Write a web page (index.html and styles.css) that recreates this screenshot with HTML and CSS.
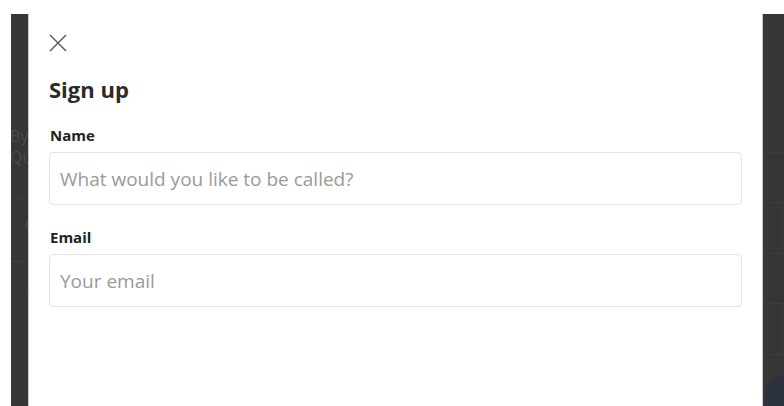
FILE: index.html
```html
<!DOCTYPE html>
<html>
<head>
<meta charset="utf-8">
<link rel="stylesheet" href="styles.css">
</head>
<body>
<div class="backdrop">
  <div class="strip strip-left">
    <div class="ghost-text">By<br>Qu</div>
    <div class="ghost-line l1"></div>
    <div class="ghost-dot orange"></div>
    <div class="ghost-line l2"></div>
    <div class="ghost-dot blue"></div>
  </div>
  <div class="modal">
    <button class="close" aria-label="Close">
      <svg width="18" height="18" viewBox="0 0 18 18"><path d="M1 1 L17 17 M17 1 L1 17" stroke="#555" stroke-width="1.4" fill="none"/></svg>
    </button>
    <h1 class="title">Sign up</h1>
    <label class="label">Name</label>
    <div class="input">What would you like to be called?</div>
    <label class="label">Email</label>
    <div class="input">Your email</div>
  </div>
  <div class="strip strip-right">
    <div class="rline"></div>
    <div class="card c1"></div>
    <div class="card c2"></div>
    <div class="fab"></div>
  </div>
</div>
</body>
</html>
```
FILE: styles.css
```css
html, body { margin: 0; padding: 0; background: #fff; }
body { width: 784px; height: 406px; overflow: hidden; font-family: "Open Sans", "Noto Sans", sans-serif; }
.backdrop {
  margin: 14px 0 0 11px;
  height: 392px;
  background: #363636;
  display: flex;
}
.strip { position: relative; overflow: hidden; }
.strip-left { width: 17px; }
.strip-right { width: 21px; }
.ghost-text { position: absolute; left: -1px; top: 112px; color: #4a4a4a; font-size: 16px; line-height: 21px; }
.ghost-line { position: absolute; left: 0; right: 0; height: 1px; background: #3f3f3f; }
.l1 { top: 184px; }
.l2 { top: 247px; }
.ghost-dot { position: absolute; width: 14px; height: 14px; border-radius: 50%; left: 14px; }
.orange { top: 204px; background: #4b4333; }
.blue { top: 268px; background: #333d4d; }
.modal {
  width: 694px;
  padding: 20px 20px 0 20px;
  background: #fff;
  border-left: 1px solid #c9c9c9;
  border-right: 1px solid #c9c9c9;
  display: flex;
  flex-direction: column;
  align-items: flex-start;
}
.close { border: 0; background: none; padding: 0; margin: 0; width: 18px; height: 18px; display: block; }
.close svg { display: block; }
.title { margin: 22px 0 0 0; font-size: 22px; line-height: 30px; font-weight: 700; color: #2b2b2b; }
.label { margin: 21px 0 0 1px; font-size: 15px; line-height: 20px; font-weight: 700; color: #222; }
.input {
  margin-top: 7px;
  align-self: stretch;
  height: 53px;
  border: 1px solid #e3e3e3;
  border-radius: 4px;
  box-sizing: border-box;
  padding: 0 10px;
  display: flex;
  align-items: center;
  font-size: 19px;
  color: #9a9a9a;
}
.input + .label { margin-top: 22px; }
.rline { position: absolute; left: 0; right: 0; top: 138px; height: 1px; background: #3e3e3e; }
.card { position: absolute; left: 0; right: 1px; height: 50px; border: 1px solid #3e3e3e; border-left: 0; }
.c1 { top: 188px; }
.c2 { top: 289px; }
.fab { position: absolute; left: 1px; top: 361px; width: 48px; height: 48px; border-radius: 50%; background: #2d3241; }
```
